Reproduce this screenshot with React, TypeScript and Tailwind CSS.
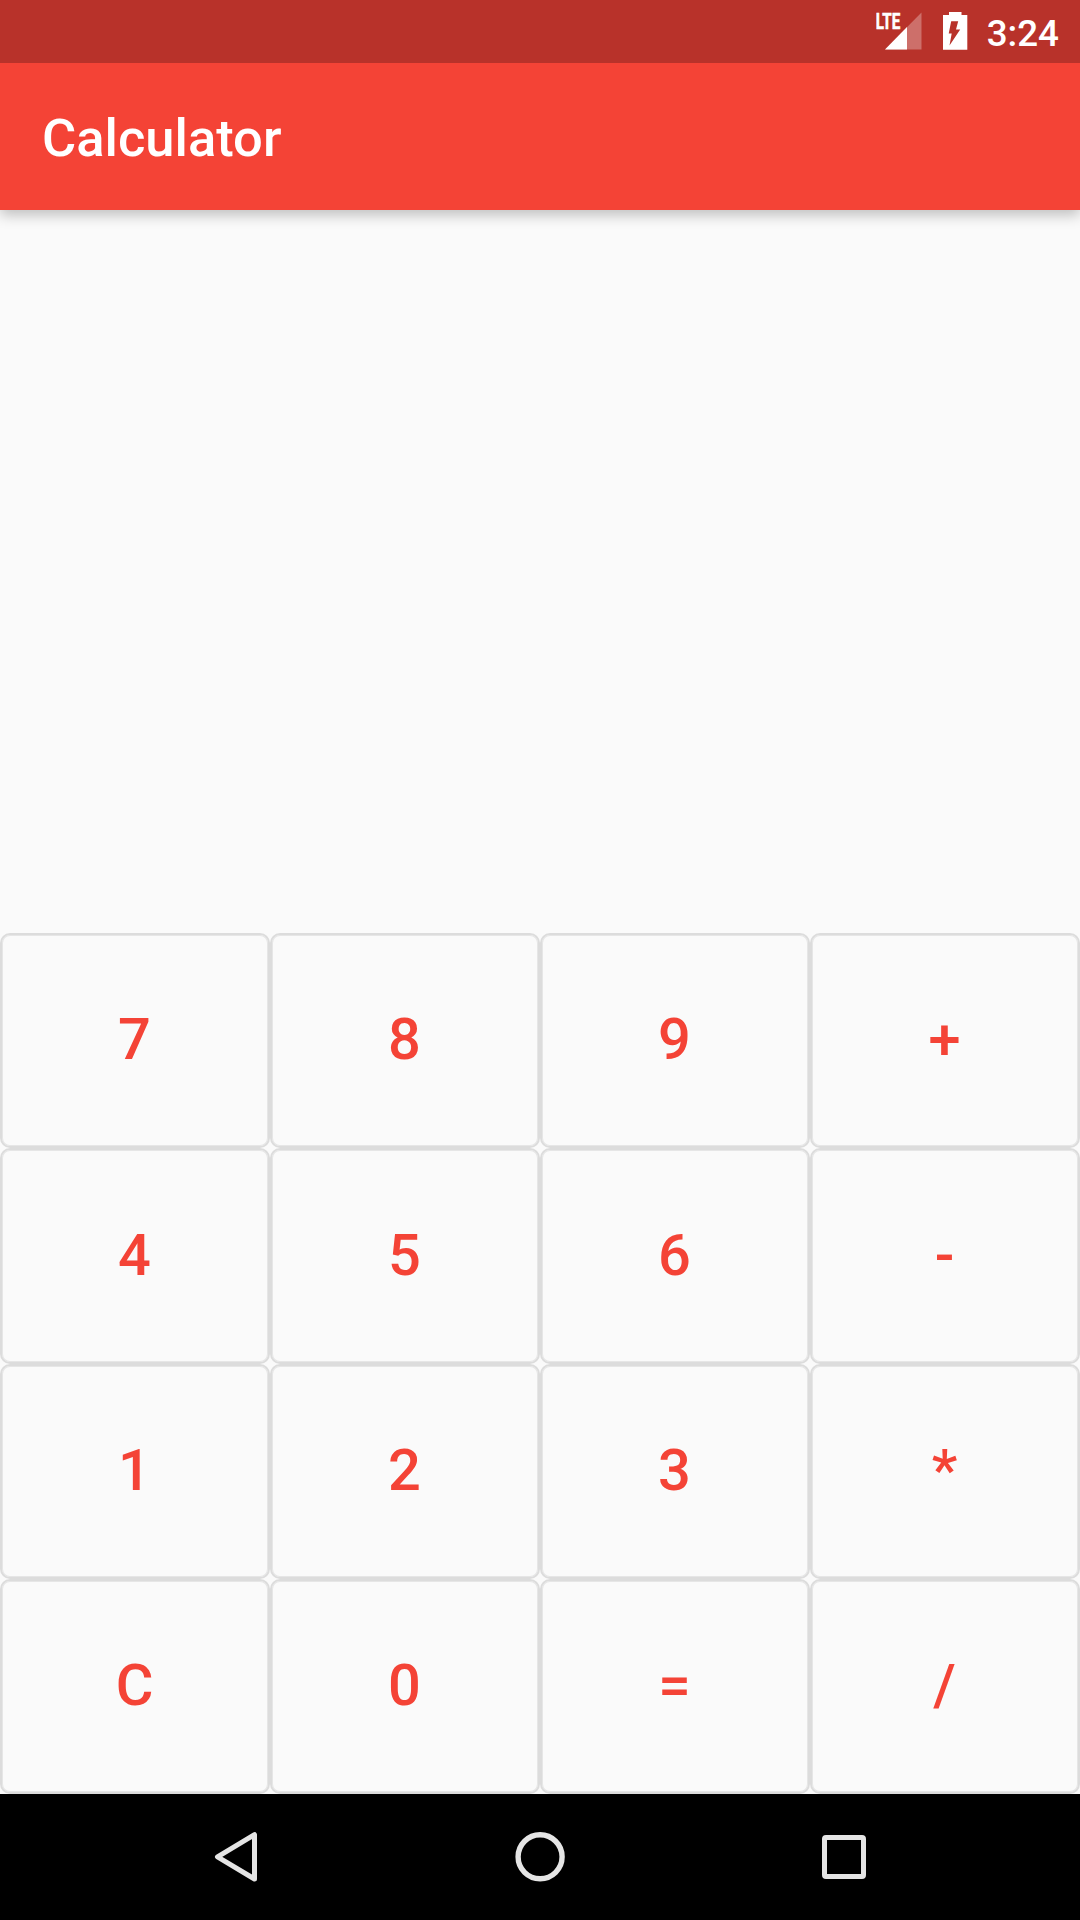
import React from 'react';

const keys = ['7', '8', '9', '+', '4', '5', '6', '-', '1', '2', '3', '*', 'C', '0', '=', '/'];

function StatusBar() {
  return (
    <div className="relative z-20 flex h-[63px] shrink-0 items-center justify-end bg-[#b8322a] pr-[21px] text-white">
      <svg className="mr-[21px]" width="46" height="63" viewBox="876 0 46 63" fill="#fff">
        <path d="M921.5 12.5V49.5H885Z" fillOpacity=".3" />
        <path d="M907 27V49.5H885Z" />
        <text x="875.7" y="29.3" fontSize="22" fontWeight="700" stroke="#fff" strokeWidth=".6" textLength="24.5" lengthAdjust="spacingAndGlyphs">LTE</text>
      </svg>
      <svg className="mr-[19px]" width="25" height="63" viewBox="943 0 25 63">
        <path d="M949 12h12.5v3h5.8v34.7H943V15h6z" fill="#fff" />
        <path d="M951.2 21.200h7l-2.200 8.300h4.200l-10.700 16 2.200-12h-3z" fill="#b8322a" />
      </svg>
      <span className="relative top-[2.5px] text-[36.75px] leading-none font-medium">3:24</span>
    </div>
  );
}

function NavBar() {
  return (
    <nav className="flex h-[126px] shrink-0 items-center justify-between bg-black px-[211px]">
      <svg width="50" height="50" viewBox="0 0 50 50" fill="none" stroke="#e5e5e5" strokeWidth="5" strokeLinejoin="round">
        <path d="M43.500 2.700V47L6.500 24.850Z" />
      </svg>
      <svg width="50" height="50" viewBox="0 0 50 50" fill="none" stroke="#e5e5e5" strokeWidth="5.400">
        <circle cx="25.100" cy="24.800" r="22" />
      </svg>
      <svg width="50" height="50" viewBox="0 0 50 50" fill="none" stroke="#e5e5e5" strokeWidth="5">
        <rect x="5.500" y="5.500" width="39" height="39" rx="1.500" />
      </svg>
    </nav>
  );
}

export default function App() {
  return (
    <div className="flex h-[1920px] w-[1080px] flex-col overflow-hidden bg-[#fafafa] font-[Roboto,sans-serif]">
      <StatusBar />
      <header className="relative z-10 flex h-[147px] shrink-0 items-center bg-[#f44336] pt-[3px] pl-[42px] text-white shadow-[0_5px_13px_rgba(0,0,0,0.24)]">
        <h1 className="text-[52.5px] leading-none font-medium">Calculator</h1>
      </header>
      <main className="flex-1" />
      <div className="grid h-[861px] shrink-0 grid-cols-4 grid-rows-4">
        {keys.map((k) => (
          <button
            key={k}
            className="rounded-[10px] border-2 border-[#dcdcdc] pr-px pb-px text-[57.75px] leading-none font-medium text-[#f44336] shadow-[inset_0_0_0_1px_#e6e6e6]"
          >
            {k}
          </button>
        ))}
      </div>
      <NavBar />
    </div>
  );
}
